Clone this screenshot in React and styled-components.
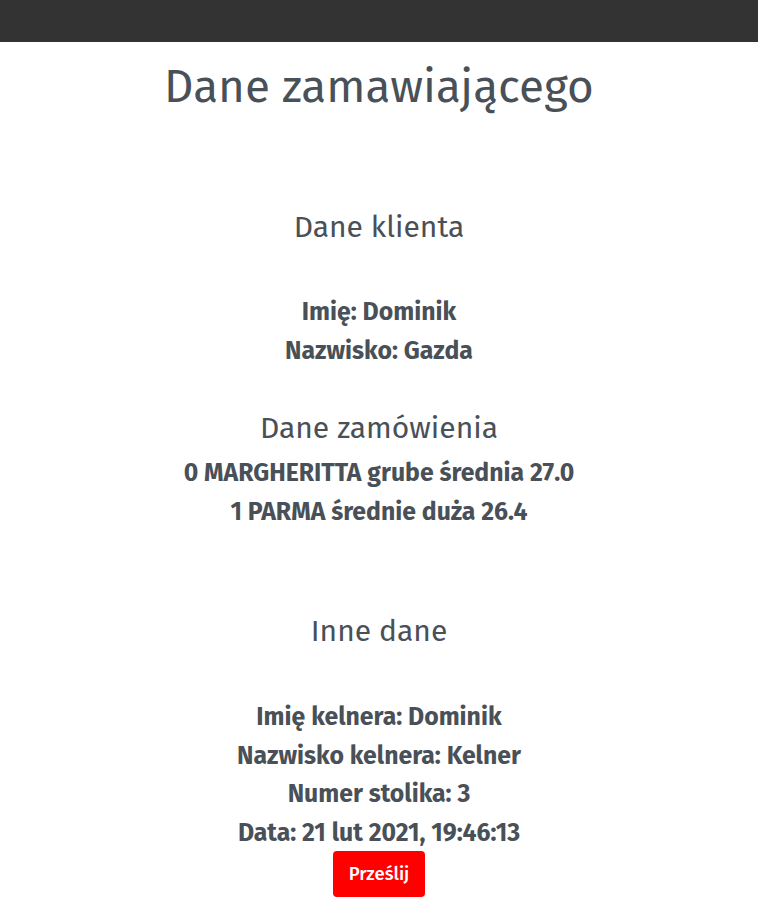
import React from 'react';
import styled, { createGlobalStyle } from 'styled-components';

const GlobalStyle = createGlobalStyle`
    body {
        margin: 0;
        background: #fff;
        font-family: "Fira Sans", "Open Sans", sans-serif;
        color: #495057;
    }
`;

// 상단 바
const TopBar = styled.div`
    height: 42px;
    background: #333333;
`;

const Page = styled.main`
    display: flex;
    flex-direction: column;
    align-items: center;
    text-align: center;
`;

const Title = styled.h1`
    margin: 18px 0 0;
    font-size: 45.8px;
    font-weight: 400;
    line-height: 53px;
`;

const Section = styled.section`
    display: flex;
    flex-direction: column;
    align-items: center;
    margin-top: ${(p) => p.$top}px;
`;

const SectionTitle = styled.h3`
    margin: 0 0 ${(p) => p.$gap}px;
    font-size: 30px;
    font-weight: 400;
    line-height: 34px;
`;

const InfoLine = styled.h4`
    margin: 0;
    font-size: 24.8px;
    font-weight: 700;
    line-height: 38.7px;
`;

const SendBtn = styled.button`
    margin-top: -2px;
    padding: 0 16px;
    height: 46px;
    border: none;
    border-radius: 4px;
    background: #ff0000;
    color: #fff;
    font-family: inherit;
    font-size: 18.5px;
    font-weight: 500;
    cursor: pointer;
`;

const client = ["Imię: Dominik", "Nazwisko: Gazda"];
const order = ["0 MARGHERITTA grube średnia 27.0", "1 PARMA średnie duża 26.4"];
const other = [
    "Imię kelnera: Dominik",
    "Nazwisko kelnera: Kelner",
    "Numer stolika: 3",
    "Data: 21 lut 2021, 19:46:13",
];

function App() {
    return (
        <>
            <GlobalStyle />
            <TopBar />
            <Page>
                <Title>Dane zamawiającego</Title>

                <Section $top={97}>
                    <SectionTitle $gap={49}>Dane klienta</SectionTitle>
                    {client.map((t) => <InfoLine key={t}>{t}</InfoLine>)}
                </Section>

                <Section $top={41}>
                    <SectionTitle $gap={9}>Dane zamówienia</SectionTitle>
                    {order.map((t) => <InfoLine key={t}>{t}</InfoLine>)}
                </Section>

                <Section $top={82}>
                    <SectionTitle $gap={50}>Inne dane</SectionTitle>
                    {other.map((t) => <InfoLine key={t}>{t}</InfoLine>)}
                    <SendBtn type="button">Prześlij</SendBtn>
                </Section>
            </Page>
        </>
    );
}

export default App;
